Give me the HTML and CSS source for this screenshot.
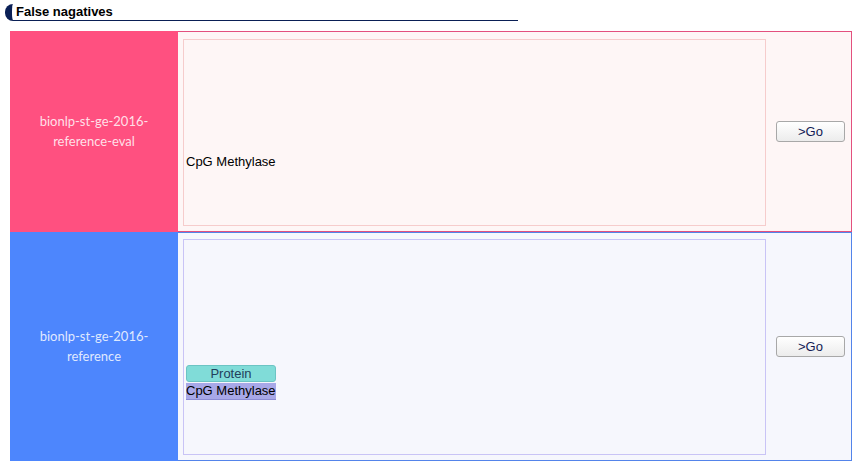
FILE: index.html
```html
<!DOCTYPE html>
<html>
<head>
<meta charset="utf-8">
<link rel="stylesheet" href="styles.css">
</head>
<body>
<div class="title">False nagatives</div>
<div class="rows">
  <div class="row row-eval">
    <div class="label">bionlp-st-ge-2016-<br>reference-eval</div>
    <div class="content">
      <div class="box"><div class="text">CpG Methylase</div></div>
    </div>
    <div class="action"><button class="go">&gt;Go</button></div>
  </div>
  <div class="row row-ref">
    <div class="label">bionlp-st-ge-2016-<br>reference</div>
    <div class="content">
      <div class="box">
        <div class="ann">
          <div class="tag">Protein</div>
          <div class="span">CpG Methylase</div>
        </div>
      </div>
    </div>
    <div class="action"><button class="go">&gt;Go</button></div>
  </div>
</div>
</body>
</html>
```
FILE: styles.css
```css
html, body {
  margin: 0;
  padding: 0;
  background: #ffffff;
  font-family: "Liberation Sans", Arial, sans-serif;
}
.title {
  margin: 4px 0 0 5px;
  width: 502px;
  height: 16px;
  padding-left: 4px;
  border-left: 7px solid #0a1f55;
  border-bottom: 1px solid #0a1f55;
  border-radius: 8px 0 0 8px;
  font-weight: bold;
  font-size: 13px;
  line-height: 15px;
  color: #000;
}
.rows {
  margin: 10px 0 0 10px;
  width: 842px;
}
.row {
  display: grid;
  grid-template-columns: 168px 1fr 85px;
  border-style: solid;
  border-width: 1px 1px 1px 0;
}
.row-eval {
  height: 199px;
  border-color: #e3507e;
  background: #fef6f6;
}
.row-ref {
  height: 227px;
  border-color: #5384ea;
  background: #f6f7fd;
}
.label {
  display: flex;
  align-items: center;
  justify-content: center;
  text-align: center;
  font-family: Lato, "Open Sans", sans-serif;
  font-size: 13px;
  line-height: 20px;
  color: rgba(255, 255, 255, 0.84);
  margin-top: -1px;
  margin-bottom: -1px;
}
.row-eval .label {
  background: #ff5080;
  padding-bottom: 2px;
}
.row-ref .label {
  background: #4d86fd;
  padding-bottom: 1px;
}
.content {
  display: flex;
  padding: 7px 0 5px 5px;
}
.row-ref .content {
  padding-top: 6px;
}
.box {
  flex: 1;
  display: flex;
  flex-direction: column;
  justify-content: flex-end;
  padding: 0 0 55px 2px;
  border: 1px solid #f6cccc;
  font-size: 13px;
  color: #000;
}
.row-ref .box {
  border-color: #c9c4f6;
  padding-bottom: 54px;
}
.text {
  line-height: 16px;
}
.ann {
  display: flex;
  flex-direction: column;
  align-items: flex-start;
}
.tag {
  box-sizing: border-box;
  width: 90px;
  height: 17px;
  background: #80dcd8;
  border: 1px solid #6cc4c4;
  border-radius: 3px;
  color: #22405c;
  text-align: center;
  line-height: 15px;
  margin-bottom: 1px;
}
.span {
  background: #a8a8e8;
  border-bottom: 1px solid #8c8cd4;
  line-height: 16px;
}
.action {
  display: flex;
  align-items: center;
  justify-content: center;
  padding-left: 4px;
}
.go {
  width: 69px;
  height: 21px;
  padding: 0;
  border: 1px solid #a8a8a8;
  border-radius: 3px;
  background: linear-gradient(#ffffff, #ececec);
  font-family: "Liberation Sans", Arial, sans-serif;
  font-size: 13px;
  color: #121a55;
}
```
